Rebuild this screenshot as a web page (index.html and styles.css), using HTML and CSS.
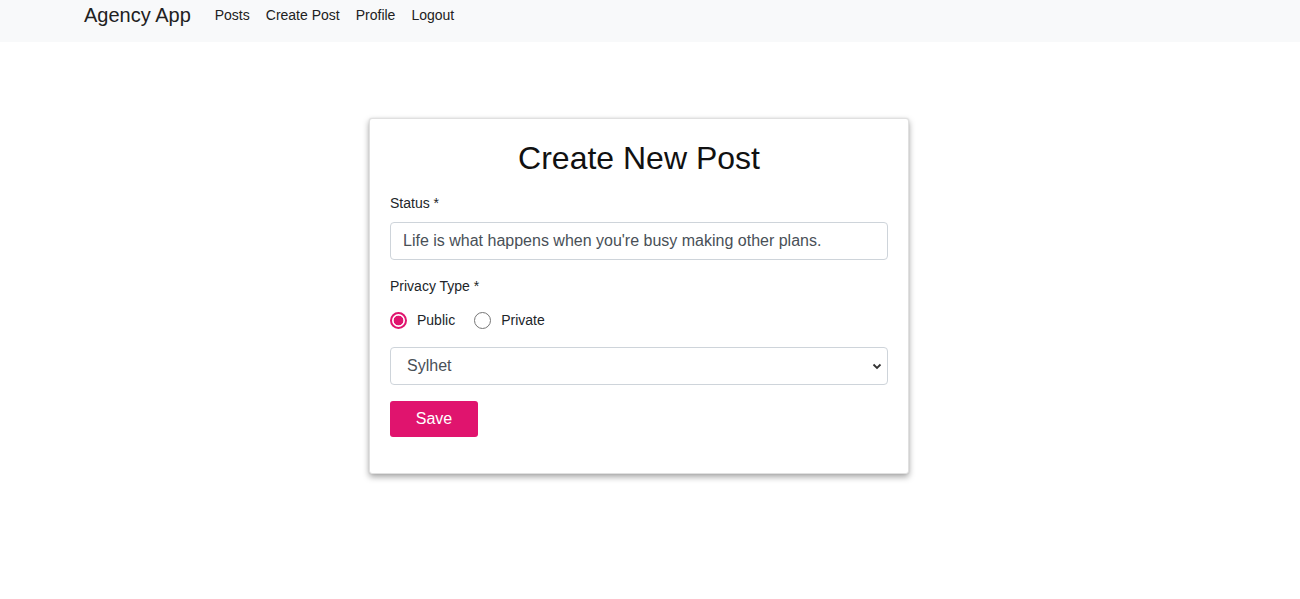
FILE: index.html
```html
<!DOCTYPE html>
<html lang="en">
<head>
<meta charset="utf-8">
<title>Agency App</title>
<link rel="stylesheet" href="styles.css">
</head>
<body>
<nav class="navbar">
  <a class="brand" href="#">Agency App</a>
  <ul class="nav-links">
    <li><a href="#">Posts</a></li>
    <li><a href="#">Create Post</a></li>
    <li><a href="#">Profile</a></li>
    <li><a href="#">Logout</a></li>
  </ul>
</nav>
<main class="main">
  <section class="card">
    <h1 class="card-title">Create New Post</h1>
    <form class="form">
      <label class="field-label" for="status">Status *</label>
      <input id="status" class="text-input" type="text" value="Life is what happens when you're busy making other plans.">
      <div class="field-label privacy-label">Privacy Type *</div>
      <div class="radio-row">
        <label class="radio-option"><input type="radio" name="privacy" class="radio" checked><span>Public</span></label>
        <label class="radio-option"><input type="radio" name="privacy" class="radio"><span>Private</span></label>
      </div>
      <div class="select-wrap">
        <select class="select-input">
          <option>Sylhet</option>
          <option>Dhaka</option>
          <option>Chittagong</option>
        </select>
        <svg class="chevron" width="10" height="8" viewBox="0 0 10 8" aria-hidden="true"><path d="M1.5 2.5 L5 6 L8.5 2.5" fill="none" stroke="#333" stroke-width="1.8"/></svg>
      </div>
      <button type="button" class="btn-save">Save</button>
    </form>
  </section>
</main>
</body>
</html>
```

FILE: styles.css
```css
* { box-sizing: border-box; }
html, body {
  margin: 0;
  padding: 0;
  background: #fff;
  font-family: "Liberation Sans", Arial, sans-serif;
  color: #212529;
}
.navbar {
  height: 42px;
  background: #f8f9fa;
  display: flex;
  align-items: flex-start;
  padding: 4px 0 0 84px;
}
.brand {
  font-size: 20px;
  line-height: 22px;
  color: #212121;
  text-decoration: none;
  margin-right: 24px;
}
.nav-links {
  list-style: none;
  margin: 0;
  padding: 0;
  display: flex;
  gap: 16px;
}
.nav-links a {
  font-size: 14px;
  line-height: 22px;
  color: #212121;
  text-decoration: none;
}
.main {
  padding: 76px 0 60px 369px;
}
.card {
  width: 540px;
  background: #fff;
  border: 1px solid #e0e0e0;
  border-radius: 3px;
  box-shadow: 0 3px 6px rgba(0,0,0,0.35), 0 0 2px rgba(0,0,0,0.1);
  padding: 20px 20px 20px;
}
.card-title {
  margin: 0 0 16px;
  font-size: 32px;
  font-weight: 400;
  line-height: 38px;
  text-align: center;
  color: #111;
}
.form {
  display: flex;
  flex-direction: column;
  align-items: flex-start;
  margin-bottom: 16px;
}
.field-label {
  font-size: 14px;
  line-height: 21px;
  color: #212529;
  margin-bottom: 8px;
}
.privacy-label { margin-top: 16px; }
.text-input {
  width: 100%;
  height: 38px;
  border: 1px solid #ced4da;
  border-radius: 4px;
  padding: 0 12px;
  font-family: "Liberation Sans", Arial, sans-serif;
  font-size: 16px;
  color: #495057;
  background: #fff;
}
.radio-row {
  display: flex;
  align-items: center;
  height: 28px;
  margin-top: 1px;
  gap: 19px;
}
.radio-option {
  display: flex;
  align-items: center;
  gap: 10px;
  font-size: 14px;
  color: #212529;
}
.radio {
  appearance: none;
  -webkit-appearance: none;
  margin: 0;
  width: 17px;
  height: 17px;
  border-radius: 50%;
  border: 1px solid #767676;
  background: #fff;
}
.radio:checked {
  border: 2px solid #e0146e;
  background: radial-gradient(circle, #e0146e 0 4.5px, #fff 5.2px);
}
.select-wrap {
  position: relative;
  width: 100%;
  margin-top: 13px;
}
.select-input {
  appearance: none;
  -webkit-appearance: none;
  width: 100%;
  height: 38px;
  border: 1px solid #ced4da;
  border-radius: 4px;
  padding: 0 30px 2px 16px;
  font-family: "Liberation Sans", Arial, sans-serif;
  font-size: 16px;
  color: #495057;
  background: #fff;
}
.chevron {
  position: absolute;
  right: 6px;
  top: 15px;
  pointer-events: none;
}
.btn-save {
  margin-top: 16px;
  width: 88px;
  height: 36px;
  border: none;
  border-radius: 3px;
  background: #e0146e;
  color: #fff;
  font-family: "Liberation Sans", Arial, sans-serif;
  font-size: 16px;
}
```
